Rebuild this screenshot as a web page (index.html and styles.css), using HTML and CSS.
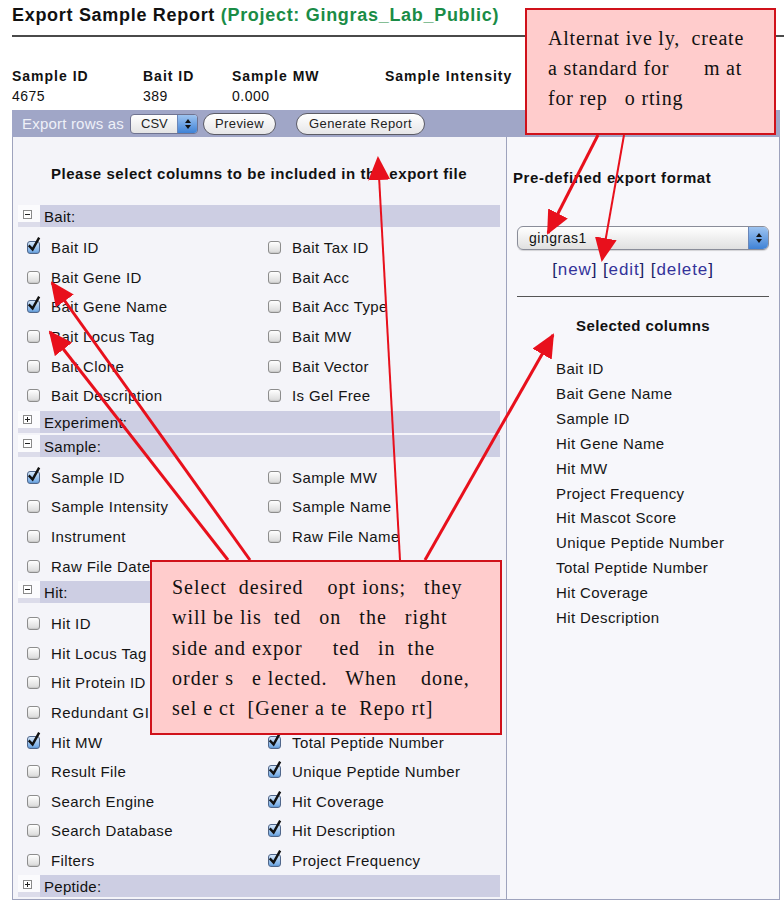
FILE: index.html
```html
<!DOCTYPE html>
<html>
<head>
<meta charset="utf-8">
<title>Export Sample Report</title>
<link rel="stylesheet" href="styles.css">
</head>
<body>
<div class="page">
  <h1 class="title">Export Sample Report <span class="proj">(Project: Gingras_Lab_Public)</span></h1>
  <div class="rule"></div>

  <div class="info">
    <div class="lbl">Sample ID</div><div class="lbl">Bait ID</div><div class="lbl">Sample MW</div><div class="lbl">Sample Intensity</div>
    <div class="val">4675</div><div class="val">389</div><div class="val">0.000</div><div class="val"></div>
  </div>

  <div class="toolbar">
    <span class="tb-label">Export rows as</span>
    <span class="mini-select"><span class="ms-text">CSV</span><span class="ms-step"><span class="up"></span><span class="dn"></span></span></span>
    <span class="pill pill-preview">Preview</span>
    <span class="pill pill-gen">Generate Report</span>
  </div>

  <div class="panels">
    <div class="left">
      <div class="left-head">Please select columns to be included in the export file</div>

      <div class="sec-h"><span class="ic-cell"><span class="ic"></span></span><span class="sec-label">Bait:</span></div>
      <div class="rows">
        <div class="row"><span class="cb on"><svg viewBox="0 0 14 16" width="14" height="16"><path d="M2.6 9.2 L5.6 12.4 L11.6 1.6" fill="none" stroke="#111" stroke-width="2.4" stroke-linecap="square"/></svg></span><span class="t">Bait ID</span></div>
        <div class="row"><span class="cb"></span><span class="t">Bait Tax ID</span></div>
        <div class="row"><span class="cb"></span><span class="t">Bait Gene ID</span></div>
        <div class="row"><span class="cb"></span><span class="t">Bait Acc</span></div>
        <div class="row"><span class="cb on"><svg viewBox="0 0 14 16" width="14" height="16"><path d="M2.6 9.2 L5.6 12.4 L11.6 1.6" fill="none" stroke="#111" stroke-width="2.4" stroke-linecap="square"/></svg></span><span class="t">Bait Gene Name</span></div>
        <div class="row"><span class="cb"></span><span class="t">Bait Acc Type</span></div>
        <div class="row"><span class="cb"></span><span class="t">Bait Locus Tag</span></div>
        <div class="row"><span class="cb"></span><span class="t">Bait MW</span></div>
        <div class="row"><span class="cb"></span><span class="t">Bait Clone</span></div>
        <div class="row"><span class="cb"></span><span class="t">Bait Vector</span></div>
        <div class="row"><span class="cb"></span><span class="t">Bait Description</span></div>
        <div class="row"><span class="cb"></span><span class="t">Is Gel Free</span></div>
      </div>

      <div class="sec-h"><span class="ic-cell"><span class="ic plus"></span></span><span class="sec-label">Experiment:</span></div>

      <div class="sec-h"><span class="ic-cell"><span class="ic"></span></span><span class="sec-label">Sample:</span></div>
      <div class="rows">
        <div class="row"><span class="cb on"><svg viewBox="0 0 14 16" width="14" height="16"><path d="M2.6 9.2 L5.6 12.4 L11.6 1.6" fill="none" stroke="#111" stroke-width="2.4" stroke-linecap="square"/></svg></span><span class="t">Sample ID</span></div>
        <div class="row"><span class="cb"></span><span class="t">Sample MW</span></div>
        <div class="row"><span class="cb"></span><span class="t">Sample Intensity</span></div>
        <div class="row"><span class="cb"></span><span class="t">Sample Name</span></div>
        <div class="row"><span class="cb"></span><span class="t">Instrument</span></div>
        <div class="row"><span class="cb"></span><span class="t">Raw File Name</span></div>
        <div class="row"><span class="cb"></span><span class="t">Raw File Date</span></div>
        <div class="row"><span class="cb"></span><span class="t">Sample Date</span></div>
      </div>

      <div class="sec-h"><span class="ic-cell"><span class="ic"></span></span><span class="sec-label">Hit:</span></div>
      <div class="rows">
        <div class="row"><span class="cb"></span><span class="t">Hit ID</span></div>
        <div class="row"><span class="cb on"><svg viewBox="0 0 14 16" width="14" height="16"><path d="M2.6 9.2 L5.6 12.4 L11.6 1.6" fill="none" stroke="#111" stroke-width="2.4" stroke-linecap="square"/></svg></span><span class="t">Hit Gene Name</span></div>
        <div class="row"><span class="cb"></span><span class="t">Hit Locus Tag</span></div>
        <div class="row"><span class="cb on"><svg viewBox="0 0 14 16" width="14" height="16"><path d="M2.6 9.2 L5.6 12.4 L11.6 1.6" fill="none" stroke="#111" stroke-width="2.4" stroke-linecap="square"/></svg></span><span class="t">Hit Mascot Score</span></div>
        <div class="row"><span class="cb"></span><span class="t">Hit Protein ID</span></div>
        <div class="row"><span class="cb"></span><span class="t">Hit Expect</span></div>
        <div class="row"><span class="cb"></span><span class="t">Redundant GI</span></div>
        <div class="row"><span class="cb"></span><span class="t">Hit Pep Num</span></div>
        <div class="row"><span class="cb on"><svg viewBox="0 0 14 16" width="14" height="16"><path d="M2.6 9.2 L5.6 12.4 L11.6 1.6" fill="none" stroke="#111" stroke-width="2.4" stroke-linecap="square"/></svg></span><span class="t">Hit MW</span></div>
        <div class="row"><span class="cb on"><svg viewBox="0 0 14 16" width="14" height="16"><path d="M2.6 9.2 L5.6 12.4 L11.6 1.6" fill="none" stroke="#111" stroke-width="2.4" stroke-linecap="square"/></svg></span><span class="t">Total Peptide Number</span></div>
        <div class="row"><span class="cb"></span><span class="t">Result File</span></div>
        <div class="row"><span class="cb on"><svg viewBox="0 0 14 16" width="14" height="16"><path d="M2.6 9.2 L5.6 12.4 L11.6 1.6" fill="none" stroke="#111" stroke-width="2.4" stroke-linecap="square"/></svg></span><span class="t">Unique Peptide Number</span></div>
        <div class="row"><span class="cb"></span><span class="t">Search Engine</span></div>
        <div class="row"><span class="cb on"><svg viewBox="0 0 14 16" width="14" height="16"><path d="M2.6 9.2 L5.6 12.4 L11.6 1.6" fill="none" stroke="#111" stroke-width="2.4" stroke-linecap="square"/></svg></span><span class="t">Hit Coverage</span></div>
        <div class="row"><span class="cb"></span><span class="t">Search Database</span></div>
        <div class="row"><span class="cb on"><svg viewBox="0 0 14 16" width="14" height="16"><path d="M2.6 9.2 L5.6 12.4 L11.6 1.6" fill="none" stroke="#111" stroke-width="2.4" stroke-linecap="square"/></svg></span><span class="t">Hit Description</span></div>
        <div class="row"><span class="cb"></span><span class="t">Filters</span></div>
        <div class="row"><span class="cb on"><svg viewBox="0 0 14 16" width="14" height="16"><path d="M2.6 9.2 L5.6 12.4 L11.6 1.6" fill="none" stroke="#111" stroke-width="2.4" stroke-linecap="square"/></svg></span><span class="t">Project Frequency</span></div>
      </div>

      <div class="sec-h"><span class="ic-cell"><span class="ic plus"></span></span><span class="sec-label">Peptide:</span></div>
    </div>

    <div class="right">
      <div class="right-head">Pre-defined export format</div>
      <div class="fmt-select"><span class="fs-text">gingras1</span><span class="fs-step"><span class="up"></span><span class="dn"></span></span></div>
      <div class="links"><span class="br">[</span>new<span class="br">]</span> <span class="br">[</span>edit<span class="br">]</span> <span class="br">[</span>delete<span class="br">]</span></div>
      <div class="sep"></div>
      <div class="sel-head">Selected columns</div>
      <ul class="sel-list">
        <li>Bait ID</li>
        <li>Bait Gene Name</li>
        <li>Sample ID</li>
        <li>Hit Gene Name</li>
        <li>Hit MW</li>
        <li>Project Frequency</li>
        <li>Hit Mascot Score</li>
        <li>Unique Peptide Number</li>
        <li>Total Peptide Number</li>
        <li>Hit Coverage</li>
        <li>Hit Description</li>
      </ul>
    </div>
  </div>
</div>

<div class="callout callout-top">Alternat ive ly,  create
a standard for      m at
for rep   o rting</div>

<div class="callout callout-mid">Select  desired    opt ions;   they
will be lis  ted   on   the   right
side and expor     ted   in  the
order s   e lected.   When    done,
sel e ct  [Gener a te  Repo rt]</div>

<svg class="arrows" width="784" height="906" viewBox="0 0 784 906">
  <defs>
    <marker id="ah" markerUnits="userSpaceOnUse" markerWidth="24" markerHeight="22" refX="22" refY="11" orient="auto">
      <path d="M0 0 L24 11 L0 22 Z" fill="#e8101c"/>
    </marker>
  </defs>
  <g stroke="#e8101c" fill="none">
    <line x1="598" y1="135" x2="548" y2="233" stroke-width="3" marker-end="url(#ah)"/>
    <line x1="624" y1="135" x2="602" y2="260" stroke-width="2" marker-end="url(#ah)"/>
    <line x1="400" y1="560" x2="378" y2="158" stroke-width="2" marker-end="url(#ah)"/>
    <line x1="425" y1="560" x2="553" y2="335" stroke-width="3" marker-end="url(#ah)"/>
    <line x1="250" y1="560" x2="52" y2="283" stroke-width="3" marker-end="url(#ah)"/>
    <line x1="228" y1="560" x2="50" y2="332" stroke-width="3" marker-end="url(#ah)"/>
  </g>
</svg>
</body>
</html>
```

FILE: styles.css
```css
html, body {
  margin: 0;
  padding: 0;
  background: #ffffff;
}
body {
  font-family: "Liberation Sans", Arial, sans-serif;
  color: #111;
  position: relative;
  width: 784px;
  height: 906px;
  overflow: hidden;
}
.page {
  padding: 4px 4px 0 12px;
}
.title {
  margin: 0;
  font-size: 18px;
  line-height: 22px;
  font-weight: bold;
  letter-spacing: 0.7px;
  color: #111;
}
.proj {
  color: #1a8c46;
}
.rule {
  height: 2px;
  background: #4a4a4a;
  margin: 9px -4px 0 0;
}
.info {
  display: grid;
  grid-template-columns: 131px 89px 153px auto;
  margin-top: 29px;
  font-size: 14px;
  line-height: 20px;
}
.lbl {
  font-weight: bold;
  letter-spacing: 1px;
}
.val {
  letter-spacing: 0.5px;
  line-height: 21px;
}
.toolbar {
  height: 27px;
  background: #a0a6c7;
  display: flex;
  align-items: center;
  padding-left: 10px;
  margin-top: 3px;
}
.tb-label {
  color: #eef0f8;
  font-size: 15px;
  letter-spacing: 0.2px;
  margin-right: 6px;
}
.mini-select {
  display: flex;
  width: 68px;
  height: 20px;
  box-sizing: border-box;
  border: 1px solid #6f7390;
  border-radius: 4px;
  background: linear-gradient(#ffffff, #e4e4e4);
  overflow: hidden;
}
.ms-text {
  flex: 1;
  font-size: 13px;
  line-height: 18px;
  padding-left: 10px;
  color: #222;
}
.ms-step, .fs-step {
  width: 19px;
  background: linear-gradient(#9ec4f0, #3f82d6);
  border-left: 1px solid #6a86b8;
  display: flex;
  flex-direction: column;
  align-items: center;
  justify-content: center;
  gap: 2px;
}
.up {
  width: 0; height: 0;
  border-left: 3px solid transparent;
  border-right: 3px solid transparent;
  border-bottom: 4px solid #111;
}
.dn {
  width: 0; height: 0;
  border-left: 3px solid transparent;
  border-right: 3px solid transparent;
  border-top: 4px solid #111;
}
.pill {
  display: inline-block;
  height: 22px;
  box-sizing: border-box;
  border: 1px solid #5c5c66;
  border-radius: 11px;
  background: linear-gradient(#ffffff, #e6e6e8);
  font-size: 13px;
  line-height: 20px;
  color: #222;
  text-align: center;
  letter-spacing: 0.4px;
}
.pill-preview {
  width: 73px;
  margin-left: 5px;
}
.pill-gen {
  width: 129px;
  margin-left: 20px;
}
.panels {
  display: flex;
  width: 768px;
}
.left {
  width: 495px;
  box-sizing: border-box;
  background: #f4f4f9;
  border-left: 1px solid #9ea3bd;
  border-right: 1px solid #9ea3bd;
  border-bottom: 1px solid #9ea3bd;
  padding: 0 6px 3px 5px;
  height: 763px;
}
.left-head {
  padding-top: 27px;
  line-height: 20px;
  font-size: 15px;
  font-weight: bold;
  text-align: center;
  letter-spacing: 0.55px;
  margin-bottom: 21px;
}
.sec-h {
  display: flex;
  height: 22px;
  margin-bottom: 2px;
}
.ic-cell {
  width: 22px;
  background: linear-gradient(#fbfbfd 0, #fbfbfd 17px, #dcdcea 17px);
  display: flex;
  align-items: center;
  justify-content: center;
  padding-right: 4px;
  padding-bottom: 4px;
  box-sizing: border-box;
}
.ic {
  width: 9px;
  height: 9px;
  box-sizing: border-box;
  border: 1px solid #8a8a8a;
  background: #fff;
  position: relative;
}
.ic::before {
  content: "";
  position: absolute;
  left: 1px;
  top: 3px;
  width: 5px;
  height: 1px;
  background: #222;
}
.ic.plus::after {
  content: "";
  position: absolute;
  left: 3px;
  top: 1px;
  width: 1px;
  height: 5px;
  background: #222;
}
.sec-label {
  flex: 1;
  background: #cdcee3;
  font-size: 15px;
  line-height: 24px;
  padding-left: 4px;
  letter-spacing: 0.3px;
}
.rows {
  display: grid;
  grid-template-columns: 241px 241px;
  grid-auto-rows: 29.6px;
  padding-top: 4px;
}
.row {
  display: flex;
  align-items: center;
  padding-left: 9px;
}
.cb {
  width: 13px;
  height: 13px;
  box-sizing: border-box;
  border: 1px solid #8d8d8d;
  border-radius: 3px;
  background: linear-gradient(#ffffff, #d9d9d9);
  box-shadow: inset 0 -1px 1px rgba(0,0,0,0.08);
  position: relative;
  flex: none;
}
.cb.on {
  background: linear-gradient(#d4e6fa, #6aa5e4);
  border-color: #50668a;
}
.cb svg {
  position: absolute;
  left: -1px;
  top: -5px;
}
.t {
  margin-left: 11px;
  font-size: 15px;
  letter-spacing: 0.4px;
  color: #151515;
  white-space: nowrap;
}
.right {
  width: 273px;
  box-sizing: border-box;
  background: #f7f7fb;
  border-right: 1px solid #9ea3bd;
  border-bottom: 1px solid #9ea3bd;
  height: 763px;
}
.right-head {
  margin-top: 31px;
  padding-left: 6px;
  font-size: 15px;
  font-weight: bold;
  line-height: 20px;
  letter-spacing: 0.6px;
}
.fmt-select {
  display: flex;
  margin: 38px 0 0 10px;
  width: 252px;
  height: 24px;
  box-sizing: border-box;
  border: 1px solid #8a8d99;
  border-radius: 6px;
  background: linear-gradient(#ffffff, #e0e0e0);
  overflow: hidden;
  box-shadow: 0 1px 1px rgba(0,0,0,0.15);
}
.fs-text {
  flex: 1;
  font-size: 14px;
  line-height: 22px;
  padding-left: 11px;
  letter-spacing: 0.5px;
  color: #111;
}
.links {
  margin-top: 10px;
  text-align: center;
  font-size: 17px;
  line-height: 20px;
  color: #33339a;
  letter-spacing: 0.9px;
  padding-right: 20px;
}
.br {
  color: #1d1d66;
}
.sep {
  margin: 16px 10px 0 10px;
  height: 1px;
  background: #555;
}
.sel-head {
  margin-top: 19px;
  text-align: center;
  font-size: 15px;
  font-weight: bold;
  line-height: 20px;
  letter-spacing: 0.4px;
}
.sel-list {
  list-style: none;
  margin: 21px 0 0 0;
  padding: 0 0 0 49px;
}
.sel-list li {
  font-size: 15px;
  line-height: 24.9px;
  letter-spacing: 0.4px;
  color: #151515;
}
.callout {
  position: absolute;
  box-sizing: border-box;
  background: #ffcccc;
  border: 2px solid #d0111a;
  font-family: "Liberation Serif", "Times New Roman", serif;
  font-size: 20px;
  color: #111;
  white-space: pre;
  z-index: 4;
}
.callout-top {
  left: 525px;
  top: 8px;
  width: 251px;
  height: 127px;
  padding: 13px 0 0 21px;
  line-height: 30px;
  letter-spacing: 0.8px;
}
.callout-mid {
  left: 150px;
  top: 560px;
  width: 352px;
  height: 175px;
  padding: 10px 0 0 20px;
  line-height: 30.3px;
  letter-spacing: 1px;
}
.arrows {
  position: absolute;
  left: 0;
  top: 0;
  z-index: 5;
  pointer-events: none;
}
```
